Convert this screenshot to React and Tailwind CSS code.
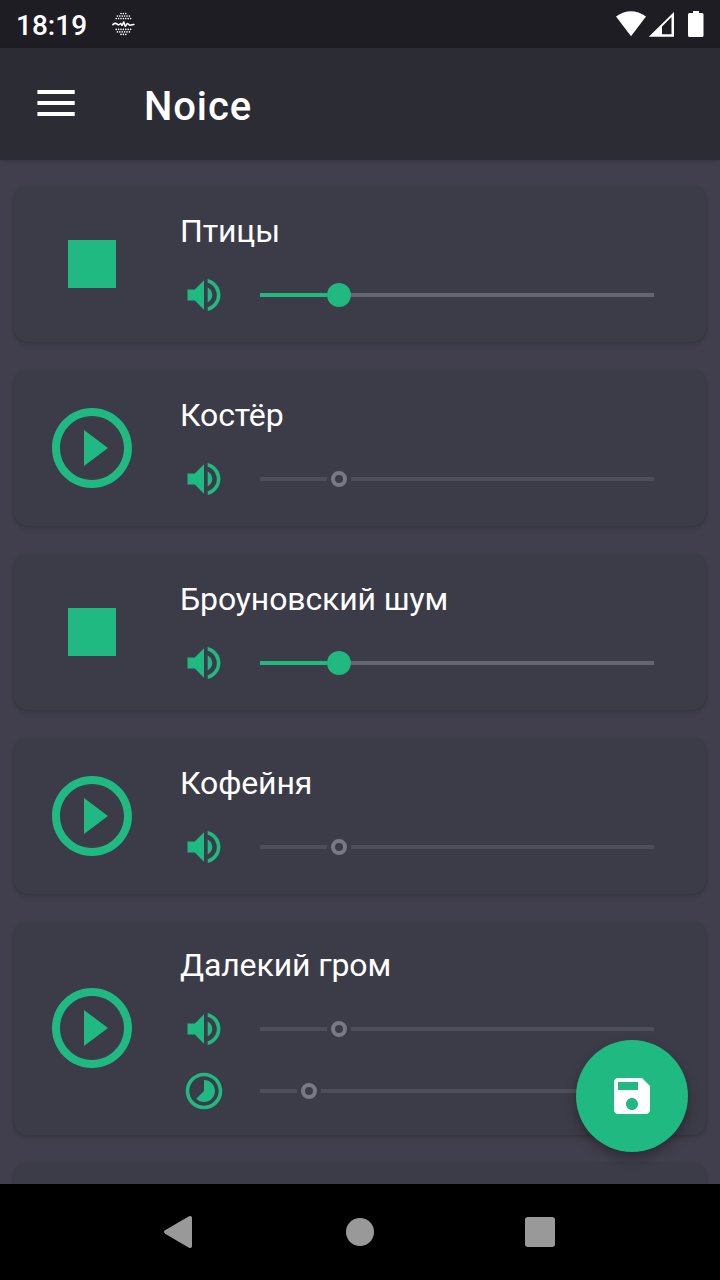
const GREEN = '#1fb981';

function PlayIcon() {
  return (
    <svg viewBox="0 0 24 24" className="size-24 shrink-0" fill={GREEN}>
      <path d="M10 16.5l6-4.5-6-4.5v9zM12 2C6.48 2 2 6.48 2 12s4.48 10 10 10 10-4.48 10-10S17.52 2 12 2zm0 18c-4.41 0-8-3.59-8-8s3.59-8 8-8 8 3.59 8 8-3.59 8-8 8z" />
    </svg>
  );
}

function StopIcon() {
  return (
    <svg viewBox="0 0 24 24" className="size-24 shrink-0" fill={GREEN}>
      <path d="M6 6h12v12H6z" />
    </svg>
  );
}

function VolumeIcon() {
  return (
    <svg viewBox="0 0 24 24" className="size-11 shrink-0" fill={GREEN}>
      <path d="M3 9v6h4l5 5V4L7 9H3zm13.5 3c0-1.77-1.02-3.29-2.5-4.03v8.05c1.48-.73 2.5-2.25 2.5-4.02zM14 3.23v2.06c2.89.86 5 3.54 5 6.71s-2.11 5.85-5 6.71v2.06c4.01-.91 7-4.49 7-8.77s-2.99-7.86-7-8.77z" />
    </svg>
  );
}

function IntervalIcon() {
  return (
    <svg viewBox="0 0 24 24" className="size-11 shrink-0" fill={GREEN}>
      <path d="M16.24 7.76C15.07 6.59 13.54 6 12 6v6l-4.24 4.24c2.34 2.34 6.14 2.34 8.49 0 2.34-2.34 2.34-6.14-.01-8.48zM12 2C6.48 2 2 6.48 2 12s4.48 10 10 10 10-4.48 10-10S17.52 2 12 2zm0 18c-4.42 0-8-3.58-8-8s3.58-8 8-8 8 3.58 8 8-3.58 8-8 8z" />
    </svg>
  );
}

function Slider({ value, active }) {
  return (
    <div className="ml-[34px] flex w-[394px] items-center">
      <div
        className={active ? 'h-1 bg-[#1fb981]' : 'h-1 bg-[#4e4e5a]'}
        style={{ width: value - 12 }}
      />
      {active ? (
        <div className="size-6 shrink-0 rounded-full bg-[#1fb981]" />
      ) : (
        <div className="mx-1 size-4 shrink-0 rounded-full border-4 border-[#797983]" />
      )}
      <div className={active ? 'h-1 flex-1 bg-[#666671]' : 'h-1 flex-1 bg-[#4e4e5a]'} />
    </div>
  );
}

function SoundCard({ name, playing, interval }) {
  return (
    <section
      className={`flex shrink-0 items-center rounded-[14px] bg-[#3c3c48] pl-[30px] shadow-[0_2px_5px_rgba(0,0,0,0.18),0_0_3px_rgba(0,0,0,0.06)] ${interval ? 'h-[213px] pb-[2px]' : 'h-[156px]'}`}
    >
      {playing ? <StopIcon /> : <PlayIcon />}
      <div className={`ml-10 flex flex-col self-start ${interval ? 'pt-6' : 'pt-[26px]'}`}>
        <h2 className="text-[32px] leading-[38px] tracking-[-0.12px] text-white">{name}</h2>
        <div className="ml-[2px] mt-[23px] flex h-11 items-center">
          <VolumeIcon />
          <Slider value={79} active={playing} />
        </div>
        {interval && (
          <div className="ml-[2px] mt-[18px] flex h-11 items-center">
            <IntervalIcon />
            <Slider value={49} active={false} />
          </div>
        )}
      </div>
    </section>
  );
}

function NotificationIcon() {
  const rows = [
    [13.6, 3], [16.1, 6], [18.6, 7], [29.4, 7], [31.9, 6], [34.4, 3],
  ];
  return (
    <svg viewBox="112 12 23 24" className="ml-[25px] h-6 w-[23px]">
      {rows.map(([y, n]) =>
        Array.from({ length: n }, (_, i) => (
          <circle key={`${y}-${i}`} cx={123.4 + (i - (n - 1) / 2) * 2.4} cy={y} r="0.8" fill="#fff" />
        )),
      )}
      <path
        d="M112.900 24.600C114.500 23 116 23 117.500 24.400S119.800 24 120.500 23.600 121.600 25.800 122.300 25.200 123.200 21.800 123.800 22 124.600 26.400 125.300 26.400 126.500 23.200 127.600 23.600 129 25.400 130.500 25.200 132.500 24.400 133.900 24.400"
        fill="none"
        stroke="#fff"
        strokeWidth="1.5"
        strokeLinecap="round"
      />
    </svg>
  );
}

function StatusBar() {
  return (
    <div className="flex h-12 shrink-0 items-center bg-[#1e1d24] pl-4 pr-[14px]">
      <span className="w-[71px] pt-[3px] text-[28px] font-medium leading-8 text-white">18:19</span>
      <NotificationIcon />
      <svg viewBox="0 0 90 28" className="ml-auto h-7 w-[90px]" fill="#fff">
        <path d="M0 6.5Q15-4 30 6.5L15 26.300Z" />
        <path fillRule="evenodd" d="M32.800 26.800L58 2V26.800ZM46 16.400V24.300H55.500V7Z" />
        <path d="M77 1h6v2h3a1.500 1.500 0 0 1 1.500 1.500v21a1.500 1.500 0 0 1-1.500 1.500h-12.500a1.500 1.500 0 0 1-1.500-1.500v-21a1.500 1.500 0 0 1 1.500-1.500h3.500z" />
      </svg>
    </div>
  );
}

const sounds = [
  { name: 'Птицы', playing: true },
  { name: 'Костёр', playing: false },
  { name: 'Броуновский шум', playing: true },
  { name: 'Кофейня', playing: false },
  { name: 'Далекий гром', playing: false, interval: true },
  { name: '', playing: false },
];

export default function App() {
  return (
    <div className="relative flex h-[1280px] w-[720px] flex-col overflow-hidden bg-[#413f4d] font-['Roboto',sans-serif]">
      <StatusBar />
      <header className="z-10 flex h-28 shrink-0 items-center bg-[#2c2c34] pl-[37px] shadow-[0_1px_5px_rgba(0,0,0,0.18)]">
        <svg viewBox="0 0 38 26" className="-mt-[2px] h-[26px] w-[38px]" fill="#fff">
          <path d="M.4 0h37.300v4H.4zM.4 11h37.300v4H.4zM.4 22h37.300v4H.4z" />
        </svg>
        <h1 className="ml-[69px] pt-[6px] text-[40px] font-medium leading-[48px] tracking-[0.9px] text-white">Noice</h1>
      </header>
      <main className="flex min-h-0 flex-1 flex-col gap-7 overflow-hidden px-[14px] pt-[26px]">
        {sounds.map((s) => (
          <SoundCard key={s.name} {...s} />
        ))}
      </main>
      <nav className="flex h-24 shrink-0 items-center justify-between bg-black pl-[164px] pr-[165px]">
        <svg viewBox="0 0 28 32" className="h-8 w-7" fill="#999">
          <path d="M1 14.300L25 .3Q28-.7 28 2V30Q28 32.700 25 31.700L1 17.700Q-1 16 1 14.300Z" />
        </svg>
        <div className="ml-[2px] size-7 rounded-full bg-[#999]" />
        <div className="size-[30px] rounded-[3px] bg-[#999]" />
      </nav>
      <button
        type="button"
        className="absolute bottom-32 right-8 z-20 flex size-28 items-center justify-center rounded-full bg-[#1fb981] shadow-[0_6px_12px_rgba(0,0,0,0.3)]"
      >
        <svg viewBox="0 0 24 24" className="size-12" fill="#fff">
          <path d="M17 3H5c-1.110 0-2 .9-2 2v14c0 1.100.890 2 2 2h14c1.100 0 2-.9 2-2V7l-4-4zm-5 16c-1.660 0-3-1.340-3-3s1.340-3 3-3 3 1.340 3 3-1.340 3-3 3zm3-10H5V5h10v4z" />
        </svg>
      </button>
    </div>
  );
}
